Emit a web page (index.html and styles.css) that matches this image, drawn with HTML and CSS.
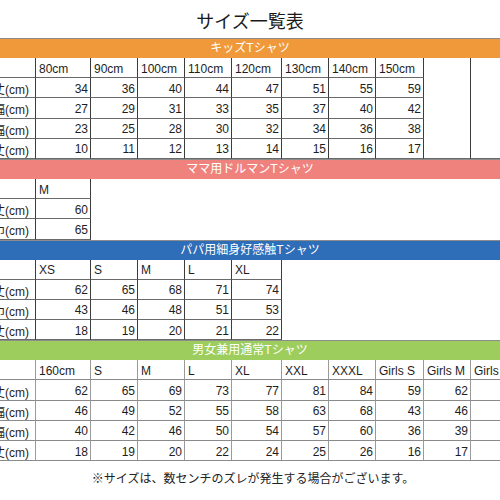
FILE: index.html
```html
<!DOCTYPE html>
<html lang="ja">

<head>
    <meta charset="UTF-8">
    <meta name="viewport" content="width=device-width, initial-scale=1.0">
    <title>サイズ一覧表</title>
    <link rel="stylesheet" href="styles.css">
</head>

<body>

    <div class="page">

        <h1 class="title">サイズ一覧表</h1>

        <!-- キッズ -->
        <div class="band orange">キッズTシャツ</div>
        <div class="sheet">
            <div class="cell label"></div>
            <div class="cell head">80cm</div>
            <div class="cell head">90cm</div>
            <div class="cell head">100cm</div>
            <div class="cell head">110cm</div>
            <div class="cell head">120cm</div>
            <div class="cell head">130cm</div>
            <div class="cell head">140cm</div>
            <div class="cell head">150cm</div>
            <div class="cell tall"></div>
            <div class="cell tall"></div>

            <div class="cell label">着丈(cm)</div>
            <div class="cell num">34</div>
            <div class="cell num">36</div>
            <div class="cell num">40</div>
            <div class="cell num">44</div>
            <div class="cell num">47</div>
            <div class="cell num">51</div>
            <div class="cell num">55</div>
            <div class="cell num">59</div>

            <div class="cell label">身幅(cm)</div>
            <div class="cell num">27</div>
            <div class="cell num">29</div>
            <div class="cell num">31</div>
            <div class="cell num">33</div>
            <div class="cell num">35</div>
            <div class="cell num">37</div>
            <div class="cell num">40</div>
            <div class="cell num">42</div>

            <div class="cell label">肩幅(cm)</div>
            <div class="cell num">23</div>
            <div class="cell num">25</div>
            <div class="cell num">28</div>
            <div class="cell num">30</div>
            <div class="cell num">32</div>
            <div class="cell num">34</div>
            <div class="cell num">36</div>
            <div class="cell num">38</div>

            <div class="cell label">袖丈(cm)</div>
            <div class="cell num">10</div>
            <div class="cell num">11</div>
            <div class="cell num">12</div>
            <div class="cell num">13</div>
            <div class="cell num">14</div>
            <div class="cell num">15</div>
            <div class="cell num">16</div>
            <div class="cell num">17</div>
        </div>

        <!-- ママ用 -->
        <div class="band pink">ママ用ドルマンTシャツ</div>
        <div class="sheet">
            <div class="cell label"></div>
            <div class="cell head">M</div>
            <div class="blank after-2"></div>

            <div class="cell label">着丈(cm)</div>
            <div class="cell num">60</div>

            <div class="cell label">身巾(cm)</div>
            <div class="cell num">65</div>
        </div>

        <!-- パパ用 -->
        <div class="band blue">パパ用細身好感触Tシャツ</div>
        <div class="sheet">
            <div class="cell label"></div>
            <div class="cell head">XS</div>
            <div class="cell head">S</div>
            <div class="cell head">M</div>
            <div class="cell head">L</div>
            <div class="cell head">XL</div>
            <div class="blank after-6"></div>

            <div class="cell label">着丈(cm)</div>
            <div class="cell num">62</div>
            <div class="cell num">65</div>
            <div class="cell num">68</div>
            <div class="cell num">71</div>
            <div class="cell num">74</div>

            <div class="cell label">身巾(cm)</div>
            <div class="cell num">43</div>
            <div class="cell num">46</div>
            <div class="cell num">48</div>
            <div class="cell num">51</div>
            <div class="cell num">53</div>

            <div class="cell label">袖丈(cm)</div>
            <div class="cell num">18</div>
            <div class="cell num">19</div>
            <div class="cell num">20</div>
            <div class="cell num">21</div>
            <div class="cell num">22</div>
        </div>

        <!-- 男女兼用 -->
        <div class="band green">男女兼用通常Tシャツ</div>
        <div class="sheet light">
            <div class="cell label"></div>
            <div class="cell head">160cm</div>
            <div class="cell head">S</div>
            <div class="cell head">M</div>
            <div class="cell head">L</div>
            <div class="cell head">XL</div>
            <div class="cell head">XXL</div>
            <div class="cell head">XXXL</div>
            <div class="cell head">Girls S</div>
            <div class="cell head">Girls M</div>
            <div class="cell head">Girls L</div>

            <div class="cell label">着丈(cm)</div>
            <div class="cell num">62</div>
            <div class="cell num">65</div>
            <div class="cell num">69</div>
            <div class="cell num">73</div>
            <div class="cell num">77</div>
            <div class="cell num">81</div>
            <div class="cell num">84</div>
            <div class="cell num">59</div>
            <div class="cell num">62</div>
            <div class="cell num">65</div>

            <div class="cell label">身幅(cm)</div>
            <div class="cell num">46</div>
            <div class="cell num">49</div>
            <div class="cell num">52</div>
            <div class="cell num">55</div>
            <div class="cell num">58</div>
            <div class="cell num">63</div>
            <div class="cell num">68</div>
            <div class="cell num">43</div>
            <div class="cell num">46</div>
            <div class="cell num">49</div>

            <div class="cell label">肩幅(cm)</div>
            <div class="cell num">40</div>
            <div class="cell num">42</div>
            <div class="cell num">46</div>
            <div class="cell num">50</div>
            <div class="cell num">54</div>
            <div class="cell num">57</div>
            <div class="cell num">60</div>
            <div class="cell num">36</div>
            <div class="cell num">39</div>
            <div class="cell num">42</div>

            <div class="cell label">袖丈(cm)</div>
            <div class="cell num">18</div>
            <div class="cell num">19</div>
            <div class="cell num">20</div>
            <div class="cell num">22</div>
            <div class="cell num">24</div>
            <div class="cell num">25</div>
            <div class="cell num">26</div>
            <div class="cell num">16</div>
            <div class="cell num">17</div>
            <div class="cell num">18</div>
        </div>

        <p class="note">※サイズは、数センチのズレが発生する場合がございます。</p>

    </div>

</body>

</html>
```

FILE: styles.css
```css
* {
    margin: 0;
    padding: 0;
    box-sizing: border-box;
}

body {
    background-color: #fff;
    color: #1e1e1e;
    font-family: "Liberation Sans", "Noto Sans CJK JP", sans-serif;
    font-size: 12px;
}

.page {
    width: 500px;
    height: 500px;
    overflow: hidden;
}

.title {
    height: 38px;
    padding-top: 12px;
    line-height: 20px;
    font-size: 18px;
    font-weight: normal;
    text-align: center;
    color: #1a1a1a;
}

/* 色付きの見出し帯 */
.band {
    width: 500px;
    height: 20px;
    border-top: 1px solid #8c8c8c;
    line-height: 19px;
    text-align: center;
    color: #fff;
}

.orange {
    background-color: #f0993a;
}

.pink {
    background-color: #f0827e;
}

.blue {
    background-color: #2e6db8;
}

.green {
    background-color: #9dcd5d;
}

/* 表本体 (右端の列は画面外まで続く) */
.sheet {
    display: grid;
    grid-template-columns: 36px 55px 47px 47px 47px 50px 47px 47px 48px 47px 47px;
    grid-auto-rows: 20.2px;
}

.cell {
    display: flex;
    align-items: center;
    white-space: nowrap;
    overflow: hidden;
    border-right: 1px solid #3c3c3c;
    border-bottom: 1px solid #6a6a6a;
    padding-top: 2px;
}

.light .cell {
    border-right-color: #9a9a9a;
    border-bottom-color: #8a8a8a;
}

.label {
    justify-content: flex-end;
    padding-right: 6px;
}

.head {
    padding-left: 3px;
}

.num {
    justify-content: flex-end;
    padding-right: 2px;
}

.tall {
    grid-row: span 5;
}

.blank {
    grid-row: span 3;
}

.after-2 {
    grid-column: 3 / -1;
}

.after-6 {
    grid-column: 7 / -1;
    grid-row: span 4;
}

.note {
    width: 500px;
    margin-top: 10px;
    padding-left: 6px;
    line-height: 16px;
    text-align: center;
    color: #222;
}
```
